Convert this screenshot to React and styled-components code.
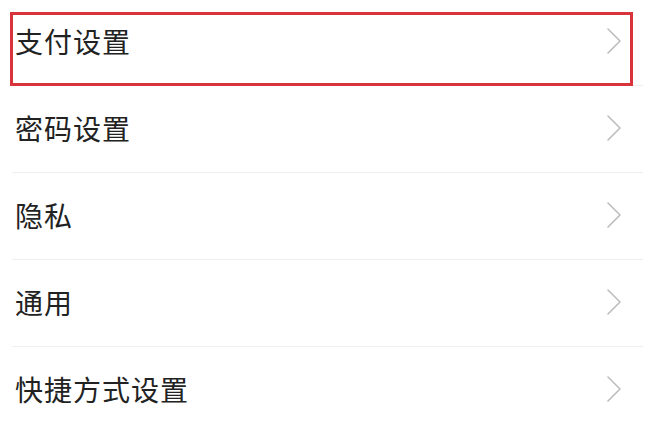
import React from 'react';
import styled, { createGlobalStyle } from 'styled-components';

const items = ['支付设置', '密码设置', '隐私', '通用', '快捷方式设置'];

const App = () => {
    return (
        <>
            <GlobalStyle />
            <StyledPage>
                <StyledList>
                    {items.map((label, i) => (
                        <StyledRow key={label}>
                            <StyledLabel>{label}</StyledLabel>
                            <Chevron />
                            {i === 0 && <StyledHighlight />}
                        </StyledRow>
                    ))}
                </StyledList>
            </StyledPage>
        </>
    );
};

const Chevron = () => (
    <StyledChevron viewBox="0 0 16 28" width="16" height="28">
        <polyline points="2,2 14,14 2,26" fill="none" stroke="#bdbdbd" strokeWidth="1.6" strokeLinecap="round" strokeLinejoin="round" />
    </StyledChevron>
);

const GlobalStyle = createGlobalStyle`
    html, body {
        margin: 0;
        padding: 0;
        background: #fff;
    }
    body {
        font-family: "Noto Sans CJK SC", "Noto Sans", sans-serif;
    }
`;

const StyledPage = styled.div`
    width: 650px;
    height: 433px;
    overflow: hidden;
    background: #fff;
`;

const StyledList = styled.div`
    display: flex;
    flex-direction: column;
    margin: -1px 7px 0 12px;
`;

const StyledRow = styled.div`
    position: relative;
    display: flex;
    align-items: center;
    justify-content: space-between;
    height: 87px;
    box-sizing: border-box;
    padding: 0 21px 0 3px;
    border-bottom: 1px solid #efefef;
`;

const StyledLabel = styled.span`
    font-size: 28px;
    line-height: 1;
    color: #222;
    letter-spacing: 1px;
    margin-top: -3px;
`;

const StyledChevron = styled.svg`
    display: block;
    margin-top: -2px;
`;

// annotation box drawn over the first row
const StyledHighlight = styled.div`
    position: absolute;
    left: -2px;
    top: 13px;
    width: 623px;
    height: 74px;
    box-sizing: border-box;
    border: 3px solid #d8343c;
    pointer-events: none;
`;

export default App;
